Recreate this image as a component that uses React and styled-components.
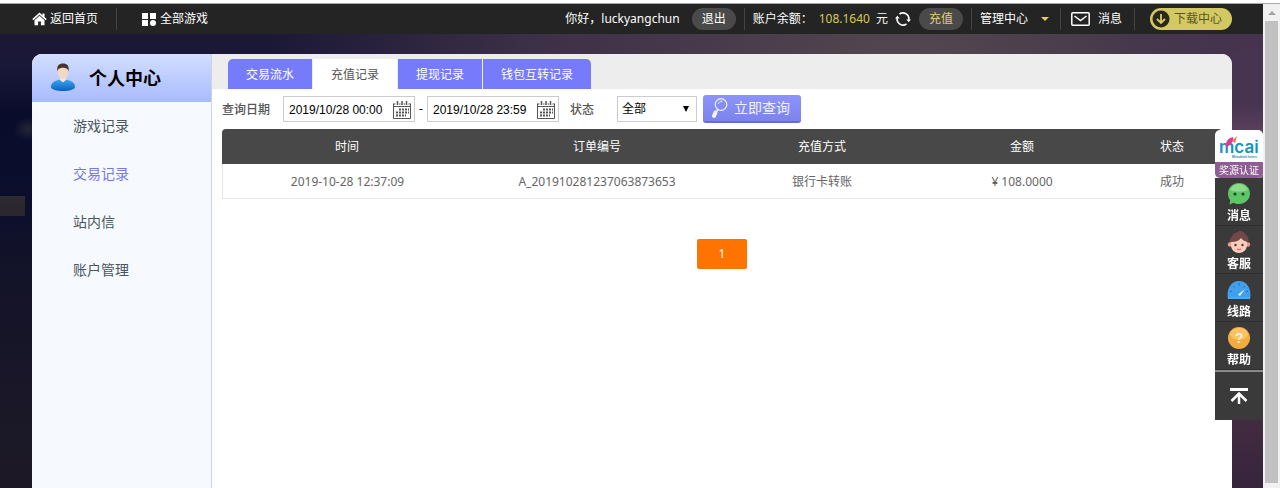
import styled, { createGlobalStyle, css } from 'styled-components';
import { useState } from 'react';

const sideMenu = ['游戏记录', '交易记录', '站内信', '账户管理'];
const tabs = ['交易流水', '充值记录', '提现记录', '钱包互转记录'];
const records = [
  {
    time: '2019-10-28 12:37:09',
    order: 'A_201910281237063873653',
    method: '银行卡转账',
    amount: '¥ 108.0000',
    status: '成功',
  },
];

// Icons
const HomeIcon = () => (
  <svg width="15" height="14" viewBox="0 0 15 14" fill="#fff">
    <path d="M7.500 0.500L0.300 7L1.300 8.200L7.500 2.700L13.700 8.200L14.700 7L12.500 5V1.500H10.500V3.200Z" />
    <path d="M7.500 3.800L2.500 8.300V13.200H6.100V9.500H8.900V13.200H12.500V8.300Z" />
  </svg>
);

const GridIcon = () => (
  <svg width="14" height="13" viewBox="0 0 14 13" fill="#fff">
    <rect width="6" height="6" />
    <rect x="8" width="6" height="6" />
    <rect y="7" width="6" height="6" />
    <circle cx="11" cy="10" r="3" />
  </svg>
);

const RefreshIcon = () => (
  <svg width="16" height="14" viewBox="0 0 16 14" fill="none" stroke="#fff" strokeWidth="1.600">
    <path d="M4.500 2A6 6 0 0 1 13.800 8" />
    <path d="M11.500 12A6 6 0 0 1 2.200 6" />
    <path d="M11.300 7.500H16L13.700 10.200Z M0 6.500H4.700L2.300 3.800Z" fill="#fff" stroke="none" />
  </svg>
);

const MailIcon = () => (
  <svg width="19" height="14" viewBox="0 0 19 14" fill="none" stroke="#fff" strokeWidth="1.500">
    <rect x="0.800" y="0.800" width="17.400" height="12.400" rx="1" />
    <path d="M3.500 4L9.500 8.600L15.500 4" />
  </svg>
);

const DownloadIcon = () => (
  <svg width="18" height="18" viewBox="0 0 18 18">
    <circle cx="9" cy="9" r="8.500" fill="#2a2818" />
    <path d="M9 4V13M5 9L9 13L13 9" fill="none" stroke="#d8cd68" strokeWidth="1.800" />
  </svg>
);

const UserIcon = () => (
  <svg width="26" height="30" viewBox="0 0 26 30">
    <defs>
      <linearGradient id="shirt" x1="0" y1="0" x2="0" y2="1">
        <stop offset="0" stopColor="#3fa4ee" />
        <stop offset="1" stopColor="#0763c0" />
      </linearGradient>
    </defs>
    <path d="M1 24C1 19 6 17.500 9.500 16.500H16.500C20 17.500 25 19 25 24C25 26.500 19 28 13 28S1 26.500 1 24Z" fill="url(#shirt)" />
    <path d="M9.500 16.500L13 19.500L16.500 16.500L15.500 14H10.500Z" fill="#f4e6da" />
    <ellipse cx="13" cy="9" rx="5.200" ry="7" fill="#f3d9c3" />
    <path d="M7.500 8.500C6.500 2.500 9 0.500 13 0.500S19.500 2.500 18.500 8.500C18 5.500 16 5 13 4.800C10 5 8 5.500 7.500 8.500Z" fill="#49342c" />
  </svg>
);

const CalendarIcon = () => (
  <svg width="18" height="18" viewBox="0 0 18 18" stroke="#555" fill="none">
    <path d="M0.500 2.500V17.500H17.500V2.500M0.500 5.500H17.500M0.500 3H2.500M6 3H7.500M10.500 3H12M15.500 3H17.500" />
    <path d="M4.500 0V4M9 0V4M13.500 0V4" strokeWidth="1.500" />
    <path d="M6 8.500H16M3 11.500H16M3 14.500H13" strokeWidth="2" strokeDasharray="2 1" />
  </svg>
);

const SearchIcon = () => (
  <svg width="18" height="22" viewBox="0 0 18 22" fill="none" stroke="#f1f2ff" strokeLinecap="round">
    <circle cx="10" cy="7.500" r="5.800" strokeWidth="1.200" />
    <path d="M7.500 6.500C7.800 4.800 9.500 3.800 11 4.200" />
    <path d="M6.800 12.500L5.200 15" strokeWidth="1.500" />
    <path d="M4.500 15.500L3 19" strokeWidth="4" />
  </svg>
);

const McaiLogo = () => (
  <svg width="48" height="32" viewBox="0 0 48 32">
    <text x="4" y="23" fontFamily="Inter, sans-serif" fontWeight="600" fontSize="17" fill="#1493bd">mcai</text>
    <path d="M11 17C10 12 13 8 18 7C19 11 16 15 11 17Z" fill="#db3c8d" />
    <path d="M17 11L22 6L20 13Z" fill="#ef7350" />
    <text x="17" y="28" fontFamily="Inter, sans-serif" fontWeight="600" fontSize="3" fill="#1b80a6">Mitsubishi lottery</text>
  </svg>
);

const ChatIcon = () => (
  <svg width="24" height="24" viewBox="0 0 24 24">
    <path d="M12 1C18 1 23 5.500 23 11.500S18 22 12 22C10 22 8 21.500 6.500 20.700L2.500 22.500L3.200 18.200C1.700 16.300 1 14 1 11.500C1 5.500 6 1 12 1Z" fill="#5dc565" />
    <path d="M3 8C5 3.500 9 2 12 2S19 3.500 21 8C16 10 8 10 3 8Z" fill="#8ddb8d" />
    <circle cx="8" cy="12" r="1.600" fill="#204823" />
    <circle cx="16" cy="12" r="1.600" fill="#204823" />
  </svg>
);

const ServiceIcon = () => (
  <svg width="24" height="24" viewBox="0 0 24 24">
    <path d="M5 6C7 2 10 3 12 1C14 0 17 2 18 4C22 6 22 11 21 15H3C2 11 3 8 5 6Z" fill="#714747" />
    <circle cx="3" cy="14.500" r="2.200" fill="#e99c8c" />
    <circle cx="21" cy="14.500" r="2.200" fill="#e99c8c" />
    <path d="M4 12C8 12 12 11 14 8C15 10 18 11 20 12C21 19 17 23 12 23S3 19 4 12Z" fill="#f9cdb9" />
    <circle cx="8.500" cy="15" r="1.200" fill="#513434" />
    <circle cx="15.500" cy="15" r="1.200" fill="#513434" />
    <path d="M10 19Q12 20.500 14 19" fill="none" stroke="#cc5b50" />
  </svg>
);

const SpeedIcon = () => (
  <svg width="24" height="24" viewBox="0 0 24 24">
    <path d="M1 21C-1 11 4 3 12 3S25 11 23 21Z" fill="#429fec" />
    <path d="M3 13L5 14M6 8L7.500 9.500M12 5V7.500M18 8L16.500 9.500M21 13L19 14" stroke="#216ab0" />
    <path d="M11 16.500L18 11L13 18Z" fill="#e4f4ff" />
    <path d="M1 20H23" stroke="#4aaaf4" strokeWidth="2" />
  </svg>
);

const HelpIcon = () => (
  <svg width="24" height="24" viewBox="0 0 24 24">
    <circle cx="12" cy="12" r="11" fill="#f4ac3c" />
    <ellipse cx="12" cy="8" rx="9" ry="6" fill="#f9c365" />
    <text x="12" y="17" textAnchor="middle" fontFamily="Liberation Sans, sans-serif" fontWeight="700" fontSize="14" fill="#fff2d8">?</text>
  </svg>
);

const TopIcon = () => (
  <svg width="18" height="16" viewBox="0 0 18 16" fill="none" stroke="#fff">
    <path d="M0 1.500H18" strokeWidth="3" />
    <path d="M9 16V6M1.500 13L9 5.500L16.500 13" strokeWidth="2.500" />
  </svg>
);

const App = () => {
  const [activeMenu, setActiveMenu] = useState('交易记录');
  const [activeTab, setActiveTab] = useState('充值记录');

  return (
    <>
      <GlobalStyle />
      <Window>
        <Page>
          <TopBar>
            <TopLink href="#home" $gap={3}><HomeIcon />返回首页</TopLink>
            <Divider $left={18} $right={25} />
            <TopLink href="#games" $gap={4}><GridIcon />全部游戏</TopLink>
            <Account>
              <span>你好，luckyangchun</span>
              <Pill $left={12}>退出</Pill>
              <Divider $left={8} $right={8} />
              <span>账户余额：</span>
              <Balance>108.1640</Balance>
              <span>元</span>
              <RefreshButton aria-label="刷新"><RefreshIcon /></RefreshButton>
              <Pill $gold $left={8}>充值</Pill>
              <Divider $left={8} $right={8} />
              <MenuButton>管理中心<Caret /></MenuButton>
              <Divider $left={11} $right={10} />
              <TopLink href="#message" $gap={8}><MailIcon />消息</TopLink>
              <Divider $left={12} $right={15} />
              <Download href="#download"><DownloadIcon />下载中心</Download>
            </Account>
          </TopBar>

          <Panel>
            <Sidebar>
              <SideTitle><UserIcon />个人中心</SideTitle>
              {sideMenu.map((item) => (
                <SideItem key={item} href="#menu" $active={item === activeMenu} onClick={() => setActiveMenu(item)}>
                  {item}
                </SideItem>
              ))}
            </Sidebar>

            <Content>
              <TabBar>
                {tabs.map((tab) => (
                  <Tab key={tab} $active={tab === activeTab} onClick={() => setActiveTab(tab)}>{tab}</Tab>
                ))}
              </TabBar>

              <Filters>
                <FilterLabel htmlFor="from" $width={61}>查询日期</FilterLabel>
                <DateBox>
                  <DateInput id="from" defaultValue="2019/10/28 00:00" />
                  <CalendarIcon />
                </DateBox>
                <Dash>-</Dash>
                <DateBox>
                  <DateInput aria-label="结束日期" defaultValue="2019/10/28 23:59" />
                  <CalendarIcon />
                </DateBox>
                <FilterLabel htmlFor="status" $width={58} $indent>状态</FilterLabel>
                <SelectBox>
                  <Select id="status">
                    <option>全部</option>
                  </Select>
                </SelectBox>
                <SearchButton type="button"><SearchIcon />立即查询</SearchButton>
              </Filters>

              <Table>
                <thead>
                  <tr>
                    <Th $width="25%">时间</Th>
                    <Th $width="25%">订单编号</Th>
                    <Th $width="20%">充值方式</Th>
                    <Th $width="20%">金额</Th>
                    <Th $width="10%">状态</Th>
                  </tr>
                </thead>
                <tbody>
                  {records.map((r) => (
                    <tr key={r.order}>
                      <Td>{r.time}</Td>
                      <Td>{r.order}</Td>
                      <Td>{r.method}</Td>
                      <Td>{r.amount}</Td>
                      <Td>{r.status}</Td>
                    </tr>
                  ))}
                </tbody>
              </Table>

              <Pagination>
                <PageButton>1</PageButton>
              </Pagination>
            </Content>
          </Panel>
        </Page>

        <ScrollTrack>
          <ScrollArrow />
          <ScrollThumb />
        </ScrollTrack>
      </Window>

      <FloatBar>
        <Certificate href="#cert">
          <McaiLogo />
          <CertLabel>奖源认证</CertLabel>
        </Certificate>
        <FloatItem href="#message"><ChatIcon />消息</FloatItem>
        <FloatItem href="#service"><ServiceIcon />客服</FloatItem>
        <FloatItem href="#line"><SpeedIcon />线路</FloatItem>
        <FloatItem href="#help"><HelpIcon />帮助</FloatItem>
        <BackTop aria-label="返回顶部"><TopIcon /></BackTop>
      </FloatBar>
    </>
  );
};

const GlobalStyle = createGlobalStyle`
  * {
    box-sizing: border-box;
  }

  body {
    margin: 0;
    background: #fff;
    font-family: 'Noto Sans', 'Noto Sans CJK SC', sans-serif;
    font-size: 12px;
    line-height: 18px;
  }

  button, input, select {
    font-family: inherit;
    font-size: inherit;
    line-height: inherit;
    margin: 0;
    padding: 0;
    border: none;
    background: none;
  }

  a {
    text-decoration: none;
  }

  svg {
    flex: none;
  }
`;

const Window = styled.div`
  display: flex;
  min-height: 100vh;
  border-top: 3px solid #fff;
`;

const Page = styled.div`
  flex: 1;
  display: flex;
  flex-direction: column;
  border-top: 1px solid #aaa;
  background:
    linear-gradient(170deg, #2c2b30, #29262d) 0 192px / 25px 20px no-repeat,
    radial-gradient(ellipse 14px 12px at 28px 125px, #232638 0%, rgba(35, 38, 56, 0) 100%),
    linear-gradient(180deg, #473450 50px, #7f5675 130px, #4a3046 320px, #35243a 440px, #2a2131 100%) 100% 50px / 31px 100% no-repeat,
    radial-gradient(ellipse 160px 100px at 100% 50px, #473450 0%, rgba(71, 52, 80, 0) 100%),
    radial-gradient(ellipse 640px 300px at 72% 60px, #54484f 0%, #3c2f48 60%, rgba(60, 47, 72, 0) 100%),
    linear-gradient(180deg, #1d1830 0, #1a1838 60px, #0a0c2c 110px, #0c0e2c 200px, #131329 260px, #1d1926 100%);
`;

const TopBar = styled.header`
  display: flex;
  align-items: center;
  height: 30px;
  padding: 0 31px 0 32px;
  background: #242424;
  color: #fff;
  white-space: nowrap;
`;

const TopLink = styled.a`
  display: flex;
  align-items: center;
  gap: ${(props) => props.$gap}px;
  color: #fff;
`;

const Divider = styled.span`
  width: 1px;
  height: 22px;
  margin: 0 ${(props) => props.$right}px 0 ${(props) => props.$left}px;
  background: #444;
`;

const Account = styled.div`
  display: flex;
  align-items: center;
  margin-left: auto;
`;

const Pill = styled.button`
  width: 44px;
  height: 22px;
  margin-left: ${(props) => props.$left}px;
  border-radius: 11px;
  background: #4a4a4a;
  color: ${(props) => (props.$gold ? '#e6cf6c' : '#fff')};
  cursor: pointer;
`;

const Balance = styled.span`
  margin: 0 6px;
  color: #d5cb58;
`;

const RefreshButton = styled.button`
  display: flex;
  margin-left: 7px;
  cursor: pointer;
`;

const MenuButton = styled.button`
  display: flex;
  align-items: center;
  gap: 13px;
  color: #fff;
  cursor: pointer;
`;

const Caret = styled.i`
  border: 4px solid transparent;
  border-top-color: #e0d060;
  border-bottom: none;
`;

const Download = styled.a`
  display: flex;
  align-items: center;
  gap: 4px;
  height: 22px;
  padding: 0 10px 0 2px;
  border-radius: 11px;
  background: #d3c963;
  color: #5c5422;
`;

const Panel = styled.main`
  flex: 1;
  display: flex;
  margin: 20px 31px 0 32px;
  border-radius: 10px 10px 0 0;
  overflow: hidden;
  background: #fff;
`;

const Sidebar = styled.nav`
  flex: none;
  width: 180px;
  border-right: 1px solid #ccd6e2;
  background: #f6faff;
`;

const SideTitle = styled.h1`
  display: flex;
  align-items: center;
  gap: 13px;
  height: 48px;
  margin: 0;
  padding-left: 18px;
  background: linear-gradient(180deg, #d2deff 0%, #a8bbfe 100%);
  color: #000;
  font-size: 18px;
  font-weight: bold;
`;

const SideItem = styled.a`
  display: block;
  padding-left: 41px;
  color: ${(props) => (props.$active ? '#7676ec' : '#4b5560')};
  font-size: 14px;
  line-height: 48px;
`;

const Content = styled.section`
  flex: 1;
  min-width: 0;
`;

const TabBar = styled.div`
  display: flex;
  gap: 1px;
  padding: 5px 16px 0;
  background: #ededed;
`;

const Tab = styled.button`
  height: 30px;
  padding: 2px 18px 0;
  background: #767bfb;
  color: #fff;
  cursor: pointer;

  &:first-child {
    border-top-left-radius: 5px;
  }

  &:last-child {
    border-top-right-radius: 5px;
  }

  ${(props) => props.$active && css`
    background: #fff;
    color: #555;
  `}
`;

const Filters = styled.form`
  display: flex;
  align-items: center;
  height: 40px;
  padding: 0 10px;
`;

const FilterLabel = styled.label`
  width: ${(props) => props.$width}px;
  padding: 2px 0 0 ${(props) => (props.$indent ? '11px' : '0')};
  color: #555;
  font-weight: 500;
`;

const DateBox = styled.span`
  display: flex;
  align-items: center;
  width: 132px;
  height: 26px;
  padding: 1px 3px 0 5px;
  border: 1px solid #ccc;
`;

const DateInput = styled.input`
  flex: 1;
  min-width: 0;
  color: #000;
  font-family: 'Liberation Sans', sans-serif;
`;

const Dash = styled.span`
  width: 12px;
  text-align: center;
`;

const SelectBox = styled.span`
  display: flex;
  align-items: center;
  width: 80px;
  height: 26px;
  margin-right: 6px;
  border: 1px solid #ccc;

  &::after {
    content: '';
    margin-left: -13px;
    border: 3px solid transparent;
    border-top: 6px solid #000;
    border-bottom: none;
    pointer-events: none;
  }
`;

const Select = styled.select`
  width: 100%;
  padding-left: 4px;
  appearance: none;
  color: #000;
`;

const SearchButton = styled.button`
  display: flex;
  align-items: center;
  gap: 5px;
  width: 98px;
  height: 28px;
  padding-left: 8px;
  border-radius: 3px;
  border-bottom: 2px solid #686ec0;
  background: linear-gradient(180deg, #8c93fa 0%, #7c83ec 100%);
  color: #f1f2ff;
  font-size: 14px;
  cursor: pointer;
`;

const Table = styled.table`
  width: calc(100% - 20px);
  margin: 0 10px;
  border-spacing: 0;
  table-layout: fixed;
`;

const Th = styled.th`
  width: ${(props) => props.$width};
  height: 35px;
  padding: 0;
  background: #484848;
  color: #fff;
  font-weight: normal;

  &:first-child {
    border-top-left-radius: 4px;
  }

  &:last-child {
    border-top-right-radius: 4px;
  }
`;

const Td = styled.td`
  height: 35px;
  padding: 2px 0 0;
  border-bottom: 1px solid #e6e6ea;
  color: #666;
  text-align: center;

  &:first-child {
    border-left: 1px solid #e6e6ea;
  }
`;

const Pagination = styled.div`
  display: flex;
  justify-content: center;
  padding: 40px 0;
`;

const PageButton = styled.button`
  width: 50px;
  height: 30px;
  border-radius: 2px;
  background: #ff7300;
  color: #fff;
  cursor: pointer;
`;

const ScrollTrack = styled.div`
  display: flex;
  flex-direction: column;
  align-items: center;
  width: 17px;
  padding-bottom: 5px;
  border-top: 1px solid #aaa;
  background: #f1f1f1;
`;

const ScrollArrow = styled.i`
  margin: 7px 0 6px;
  border: 4px solid transparent;
  border-top: none;
  border-bottom-color: #a3a3a3;
`;

const ScrollThumb = styled.div`
  flex: 1;
  width: 13px;
  background: #c1c1c1;
`;

const FloatBar = styled.aside`
  position: fixed;
  top: 130px;
  right: 17px;
  display: flex;
  flex-direction: column;
  width: 48px;
`;

const Certificate = styled.a`
  height: 48px;
  border-radius: 5px;
  overflow: hidden;
  background: #fff;

  svg {
    display: block;
  }
`;

const CertLabel = styled.span`
  display: block;
  background: #8d5d93;
  color: #fff;
  font-size: 10px;
  line-height: 16px;
  text-align: center;
`;

const FloatItem = styled.a`
  display: flex;
  flex-direction: column;
  align-items: center;
  height: 48px;
  padding-top: 4px;
  border-bottom: 1px solid #2e2e2e;
  background: #3a3a3a;
  color: #fff;
  font-weight: bold;
  line-height: 20px;
`;

const BackTop = styled.button`
  display: flex;
  align-items: center;
  justify-content: center;
  height: 50px;
  border-top: 2px solid #8a8a8a;
  background: #3a3a3a;
  cursor: pointer;
`;

export default App;
